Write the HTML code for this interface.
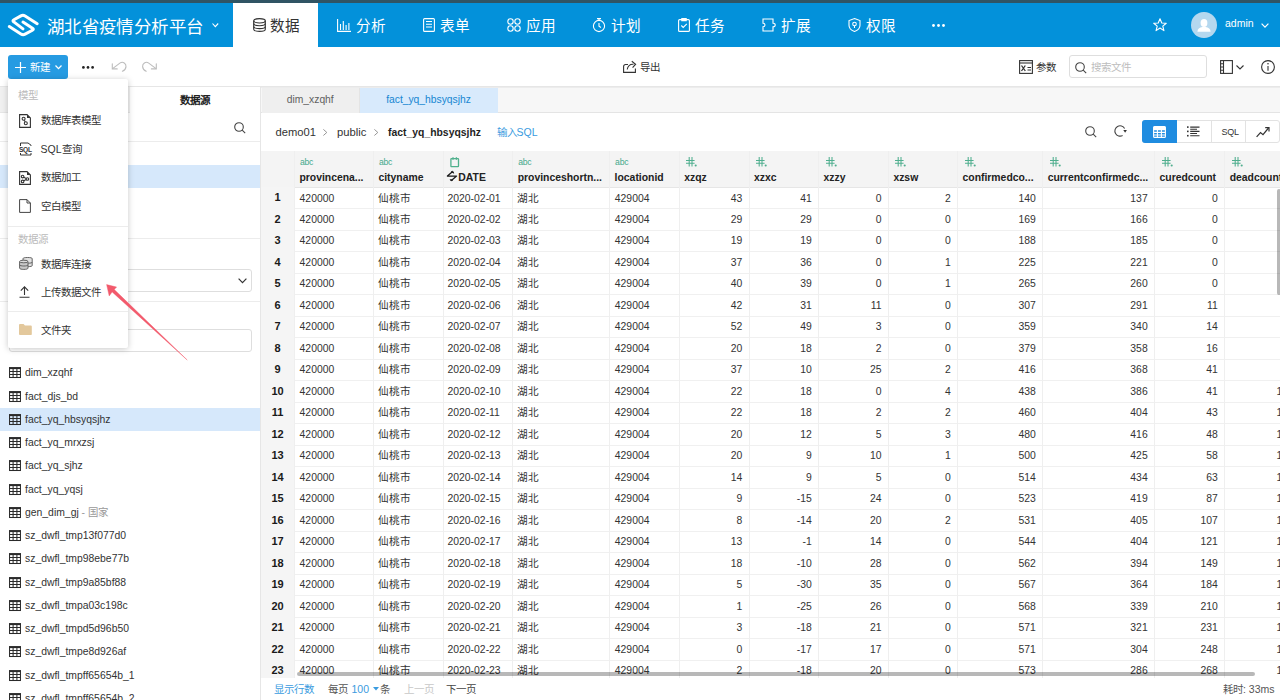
<!DOCTYPE html>
<html lang="zh-CN">
<head>
<meta charset="utf-8">
<style>
*{box-sizing:border-box;margin:0;padding:0}
html,body{width:1280px;height:700px;overflow:hidden;background:#fff;font-family:"Liberation Sans",sans-serif;color:#333;font-size:10.4px}
.abs{position:absolute}
#topstrip{position:absolute;left:0;top:0;width:1280px;height:3px;background:#305464}
#header{position:absolute;left:0;top:3px;width:1280px;height:44px;background:#0391da}
.title{position:absolute;left:47px;top:10.6px;font-size:17.45px;letter-spacing:0.36px;color:#fff;line-height:26px;white-space:nowrap}
.nav{position:absolute;top:0;height:44px;width:85px;color:#fff;font-size:14.6px;line-height:46px;white-space:nowrap}
.nav.active{background:#fff;color:#333}
.nav svg{position:absolute}
.nav span{position:absolute}
svg{overflow:visible}
.hl{position:absolute;left:294.4px;width:986px;height:1px;background:#f0f0f0}
.vl{position:absolute;width:1px;background:#efefef}
.tabc{position:absolute;font-size:8.6px;line-height:10px;color:#45a98c;letter-spacing:-0.2px}
.hname{position:absolute;font-weight:bold;font-size:10.4px;line-height:14px;color:#222;white-space:nowrap}
.rn{position:absolute;left:261px;width:33px;text-align:center;font-weight:bold;line-height:21px;font-size:11px;color:#1a1a1a}
.cl{position:absolute;line-height:21px;white-space:nowrap;color:#333}
.cr{position:absolute;line-height:21px;white-space:nowrap;text-align:right;color:#333}

</style>
</head>
<body>
<div id="topstrip"></div>
<div id="header">
  <svg class="abs" style="left:0;top:-3px" width="45" height="45" viewBox="0 0 45 45">
    <g fill="none" stroke="#fff" stroke-width="3" stroke-linecap="round" stroke-linejoin="round">
      <path d="M37.2,23.7L25.1,16Q23,14.7 20.9,15.9L13.9,19.7Q12.1,20.7 13.8,21.9L23,28.9"/>
      <path d="M9.3,26.5L20.9,34Q23,35.3 25.1,34.2L32.4,30.3Q34.2,29.3 32.5,28.2L23,22"/>
    </g>
  </svg>
  <div class="title">湖北省疫情分析平台</div>
  <svg class="abs" style="left:212px;top:20px" width="7" height="5" viewBox="0 0 7 5"><polyline points="0.5,0.5 3.3,3.6 6.2,0.5" fill="none" stroke="#fff" stroke-width="1.1"/></svg>

  <div class="nav active" style="left:233px">
    <svg style="left:20px;top:15px" width="13" height="14" viewBox="0 0 13 14"><g fill="none" stroke="#333" stroke-width="1.1"><ellipse cx="6.5" cy="2.8" rx="5.8" ry="2.2"/><path d="M0.7,2.8V11.2c0,1.2 2.6,2.2 5.8,2.2s5.8,-1 5.8,-2.2V2.8"/><path d="M0.7,5.6c0,1.2 2.6,2.2 5.8,2.2s5.8,-1 5.8,-2.2"/><path d="M0.7,8.4c0,1.2 2.6,2.2 5.8,2.2s5.8,-1 5.8,-2.2"/></g></svg>
    <span style="left:37.3px">数据</span>
  </div>
  <div class="nav" style="left:318px">
    <svg style="left:19px;top:16px" width="14" height="13" viewBox="0 0 14 13"><g fill="none" stroke="#fff" stroke-width="1.1"><path d="M0.6,0V12.4H14"/><path d="M3.5,5V11M6.3,2V11M9.1,6V11M11.9,4V11"/></g></svg>
    <span style="left:38.3px">分析</span>
  </div>
  <div class="nav" style="left:403px">
    <svg style="left:20px;top:15px" width="12" height="14" viewBox="0 0 12 14"><g fill="none" stroke="#fff" stroke-width="1.1"><rect x="0.6" y="0.6" width="10.8" height="12.8" rx="1"/><path d="M3,3.5H9M3,6.2H9M3,9H9"/></g></svg>
    <span style="left:37.3px">表单</span>
  </div>
  <div class="nav" style="left:488px">
    <svg style="left:19px;top:15px" width="14" height="14" viewBox="0 0 14 14"><g fill="none" stroke="#fff" stroke-width="1.1"><circle cx="3.5" cy="3.5" r="2.7"/><circle cx="10.5" cy="3.5" r="2.7"/><circle cx="3.5" cy="10.5" r="2.7"/><circle cx="10.5" cy="10.5" r="2.7"/></g></svg>
    <span style="left:38.3px">应用</span>
  </div>
  <div class="nav" style="left:573px">
    <svg style="left:19px;top:15px" width="14" height="14" viewBox="0 0 14 14"><g fill="none" stroke="#fff" stroke-width="1.1"><circle cx="7" cy="8" r="5.6"/><path d="M7,5V8.3L9,9.5M5,0.6H9M7,0.6V2.4"/></g></svg>
    <span style="left:38.3px">计划</span>
  </div>
  <div class="nav" style="left:658px">
    <svg style="left:20px;top:15px" width="12" height="14" viewBox="0 0 12 14"><g fill="none" stroke="#fff" stroke-width="1.1"><rect x="0.6" y="1.6" width="10.8" height="11.8" rx="1"/><path d="M3.8,0.6H8.2V2.6H3.8Z"/><path d="M3.3,7.5L5.2,9.4L8.8,5.8"/></g></svg>
    <span style="left:37.3px">任务</span>
  </div>
  <div class="nav" style="left:743px">
    <svg style="left:19px;top:15px" width="14" height="14" viewBox="0 0 14 14"><g fill="none" stroke="#fff" stroke-width="1.1"><path d="M1,1H11V5.2C12.5,5.2 13.2,6 13.2,7S12.5,8.8 11,8.8V13H1V8.8C2.5,8.8 3,8 3,7S2.5,5.2 1,5.2Z"/></g></svg>
    <span style="left:38.3px">扩展</span>
  </div>
  <div class="nav" style="left:828px">
    <svg style="left:20px;top:15px" width="13" height="14" viewBox="0 0 13 14"><g fill="none" stroke="#fff" stroke-width="1.1"><path d="M6.5,0.6L12,2.6V7.2C12,10.2 9.6,12.4 6.5,13.4C3.4,12.4 1,10.2 1,7.2V2.6Z"/><circle cx="6.5" cy="6" r="1.8"/><path d="M6.5,7.8V10"/></g></svg>
    <span style="left:38.3px">权限</span>
  </div>
  <div class="nav" style="left:913px;width:50px">
    <svg style="left:19px;top:21px" width="13" height="3" viewBox="0 0 13 3"><g fill="#fff"><circle cx="1.5" cy="1.5" r="1.4"/><circle cx="6.5" cy="1.5" r="1.4"/><circle cx="11.5" cy="1.5" r="1.4"/></g></svg>
  </div>

  <svg class="abs" style="left:1153px;top:15.2px" width="14" height="14" viewBox="0 0 15 15"><path d="M7.5,0.8L9.4,5.3L14.2,5.6L10.5,8.7L11.7,13.5L7.5,10.8L3.3,13.5L4.5,8.7L0.8,5.6L5.6,5.3Z" fill="none" stroke="#fff" stroke-width="1.2" stroke-linejoin="round"/></svg>
  <div class="abs" style="left:1190.7px;top:8.6px;width:26px;height:26.5px;border-radius:50%;background:#b5d8ef;overflow:hidden">
    <svg width="26" height="26" viewBox="0 0 26 26"><g fill="#fff"><ellipse cx="13" cy="11" rx="3.4" ry="3.9"/><path d="M6.4,19.8C6.4,16.8 8.6,15.4 11.4,15H14.6C17.4,15.4 19.6,16.8 19.6,19.8Z"/></g></svg>
  </div>
  <div class="abs" style="left:1225px;top:6.8px;color:#fff;font-size:10.5px;line-height:26px">admin</div>
  <svg class="abs" style="left:1261px;top:19.5px" width="9" height="6" viewBox="0 0 9 6"><polyline points="0.6,0.6 4,4.2 7.4,0.6" fill="none" stroke="#fff" stroke-width="1.2"/></svg>
</div>


<!-- toolbar -->
<div id="toolbar" class="abs" style="left:0;top:47px;width:1280px;height:40px;border-bottom:1px solid #e6e6e6">
  <div class="abs" style="left:8px;top:8.2px;width:60px;height:23.6px;background:#269be2;border-radius:3px"></div>
  <svg class="abs" style="left:14.5px;top:14.5px" width="11" height="11" viewBox="0 0 11 11"><path d="M5.5,0V11M0,5.5H11" stroke="#fff" stroke-width="1.2"/></svg>
  <div class="abs" style="left:30px;top:13px;color:#fff;font-size:10.5px;line-height:14px">新建</div>
  <svg class="abs" style="left:55px;top:18px" width="7" height="5" viewBox="0 0 7 5"><polyline points="0.5,0.5 3.5,3.6 6.5,0.5" fill="none" stroke="#fff" stroke-width="1.3"/></svg>
  <svg class="abs" style="left:82px;top:18.6px" width="12" height="3" viewBox="0 0 12 3"><g fill="#222"><circle cx="1.4" cy="1.4" r="1.35"/><circle cx="6" cy="1.4" r="1.35"/><circle cx="10.6" cy="1.4" r="1.35"/></g></svg>
  <svg class="abs" style="left:105px;top:8px" width="60" height="25" viewBox="105 55 60 25"><g fill="none" stroke="#bdbdbd" stroke-width="1.1" stroke-linecap="round"><path d="M112.9,68.4L120.2,62.9C123,61.2 126.2,63.5 126,66.6C125.9,68.6 124.5,70.3 122.4,71.3"/><path d="M112.3,63.8V68.9H117.2"/><path d="M155.7,68.4L148.4,62.9C145.6,61.2 142.4,63.5 142.6,66.6C142.7,68.6 144.1,70.3 146.2,71.3"/><path d="M156.3,63.8V68.9H151.4"/></g></svg>

  <svg class="abs" style="left:623px;top:13px" width="14" height="13" viewBox="0 0 14 13"><g fill="none" stroke="#333" stroke-width="1.1"><path d="M5,4.5H2.5C1.4,4.5 0.6,5.3 0.6,6.4V12.4H12.4V8.5"/><path d="M4.2,9.5C4.8,6 7.5,4 10.5,4.2"/><path d="M8.8,1.2L12.6,4.2L9.6,7.6"/></g></svg>
  <div class="abs" style="left:640px;top:12.5px;font-size:10.5px;line-height:14px;color:#333">导出</div>

  <svg class="abs" style="left:1019px;top:13px" width="14" height="14" viewBox="0 0 14 14"><g fill="none" stroke="#333" stroke-width="1.1"><rect x="0.6" y="0.6" width="12.8" height="12.8"/><path d="M0.6,3H13.4"/></g><path d="M2.5,5.5L6.3,11M6.3,5.5L2.5,11" stroke="#333" stroke-width="1.3"/><path d="M8.5,7.5H12M8.5,10H12" stroke="#333" stroke-width="1"/></svg>
  <div class="abs" style="left:1036px;top:13px;font-size:10.5px;line-height:14px;color:#333">参数</div>
  <div class="abs" style="left:1069px;top:7.9px;width:137.5px;height:23px;border:1px solid #dedede;border-radius:3px"></div>
  <svg class="abs" style="left:1074.5px;top:14.5px" width="12" height="12" viewBox="0 0 12 12"><g fill="none" stroke="#444" stroke-width="1.1"><circle cx="5" cy="5" r="4.3"/><path d="M8.2,8.2L11.2,11.2"/></g></svg>
  <div class="abs" style="left:1090.5px;top:12.5px;font-size:10.5px;line-height:14px;color:#bdbdbd">搜索文件</div>
  <svg class="abs" style="left:1220px;top:13px" width="13" height="14" viewBox="0 0 13 14"><g fill="none" stroke="#333" stroke-width="1.1"><rect x="0.6" y="0.6" width="11.8" height="12.8"/><path d="M3.5,0.6V13.4"/><path d="M0.6,3.8H3.5M0.6,7H3.5M0.6,10.2H3.5"/></g></svg>
  <svg class="abs" style="left:1236px;top:18px" width="8" height="5" viewBox="0 0 8 5"><polyline points="0.5,0.5 4,4 7.5,0.5" fill="none" stroke="#333" stroke-width="1.1"/></svg>
  <svg class="abs" style="left:1261px;top:13px" width="14" height="14" viewBox="0 0 14 14"><g fill="none" stroke="#333" stroke-width="1.1"><circle cx="7" cy="7" r="6.4"/><path d="M7,6V10.8"/></g><circle cx="7" cy="3.8" r="0.8" fill="#333"/></svg>
</div>

<!-- left panel -->
<div id="left" class="abs" style="left:0;top:87px;width:261px;height:613px;border-right:1px solid #e6e6e6;overflow:hidden">
  <div class="abs" style="left:0;top:0;width:130px;height:26px;background:#f0f0f0;border-bottom:1px solid #e6e6e6"></div>
  <div class="abs" style="left:130px;top:0;width:130px;height:26px;font-weight:bold;text-align:center;line-height:26px;font-size:10.5px;color:#222">数据源</div>
  <svg class="abs" style="left:234px;top:35px" width="12" height="12" viewBox="0 0 12 12"><g fill="none" stroke="#444" stroke-width="1.1"><circle cx="5" cy="5" r="4.3"/><path d="M8.2,8.2L11.2,11.2"/></g></svg>
  <div class="abs" style="left:0;top:54px;width:260px;height:1px;background:#ececec"></div>
  <div class="abs" style="left:0;top:78px;width:260px;height:23px;background:#d6e8fb"></div>
  <div class="abs" style="left:0;top:151px;width:260px;height:1px;background:#ececec"></div>
  <div class="abs" style="left:9px;top:181.5px;width:242.5px;height:23px;border:1px solid #dedede;border-radius:3px"></div>
  <svg class="abs" style="left:238px;top:190.5px" width="9" height="6" viewBox="0 0 9 6"><polyline points="0.6,0.6 4.5,4.6 8.4,0.6" fill="none" stroke="#333" stroke-width="1.2"/></svg>
  <div class="abs" style="left:0;top:213.5px;width:260px;height:1px;background:#ececec"></div>
  <div class="abs" style="left:9px;top:242px;width:242.5px;height:23px;border:1px solid #dedede;border-radius:3px"></div>
  <div class="abs" style="left:0;top:320.5px;width:260px;height:23.25px;background:#d6e8fb"></div>
  <svg class="abs" style="left:9px;top:280.30px" width="12" height="11" viewBox="0 0 12 11"><g fill="none" stroke="#2a2a2a" stroke-width="1.05"><rect x="0.55" y="0.8" width="10.9" height="9.7"/><path d="M0.5,4.4H11.5M0.5,7.4H11.5M4.1,2V10.5M7.9,2V10.5"/></g><rect x="0" y="0.2" width="12" height="1.9" fill="#2a2a2a"/></svg>
<div class="abs" style="left:25px;top:279.40px;line-height:14px;font-size:10.4px;color:#333;white-space:nowrap">dim_xzqhf</div>
<svg class="abs" style="left:9px;top:303.55px" width="12" height="11" viewBox="0 0 12 11"><g fill="none" stroke="#2a2a2a" stroke-width="1.05"><rect x="0.55" y="0.8" width="10.9" height="9.7"/><path d="M0.5,4.4H11.5M0.5,7.4H11.5M4.1,2V10.5M7.9,2V10.5"/></g><rect x="0" y="0.2" width="12" height="1.9" fill="#2a2a2a"/></svg>
<div class="abs" style="left:25px;top:302.65px;line-height:14px;font-size:10.4px;color:#333;white-space:nowrap">fact_djs_bd</div>
<svg class="abs" style="left:9px;top:326.80px" width="12" height="11" viewBox="0 0 12 11"><g fill="none" stroke="#2a2a2a" stroke-width="1.05"><rect x="0.55" y="0.8" width="10.9" height="9.7"/><path d="M0.5,4.4H11.5M0.5,7.4H11.5M4.1,2V10.5M7.9,2V10.5"/></g><rect x="0" y="0.2" width="12" height="1.9" fill="#2a2a2a"/></svg>
<div class="abs" style="left:25px;top:325.90px;line-height:14px;font-size:10.4px;color:#333;white-space:nowrap">fact_yq_hbsyqsjhz</div>
<svg class="abs" style="left:9px;top:350.05px" width="12" height="11" viewBox="0 0 12 11"><g fill="none" stroke="#2a2a2a" stroke-width="1.05"><rect x="0.55" y="0.8" width="10.9" height="9.7"/><path d="M0.5,4.4H11.5M0.5,7.4H11.5M4.1,2V10.5M7.9,2V10.5"/></g><rect x="0" y="0.2" width="12" height="1.9" fill="#2a2a2a"/></svg>
<div class="abs" style="left:25px;top:349.15px;line-height:14px;font-size:10.4px;color:#333;white-space:nowrap">fact_yq_mrxzsj</div>
<svg class="abs" style="left:9px;top:373.30px" width="12" height="11" viewBox="0 0 12 11"><g fill="none" stroke="#2a2a2a" stroke-width="1.05"><rect x="0.55" y="0.8" width="10.9" height="9.7"/><path d="M0.5,4.4H11.5M0.5,7.4H11.5M4.1,2V10.5M7.9,2V10.5"/></g><rect x="0" y="0.2" width="12" height="1.9" fill="#2a2a2a"/></svg>
<div class="abs" style="left:25px;top:372.40px;line-height:14px;font-size:10.4px;color:#333;white-space:nowrap">fact_yq_sjhz</div>
<svg class="abs" style="left:9px;top:396.55px" width="12" height="11" viewBox="0 0 12 11"><g fill="none" stroke="#2a2a2a" stroke-width="1.05"><rect x="0.55" y="0.8" width="10.9" height="9.7"/><path d="M0.5,4.4H11.5M0.5,7.4H11.5M4.1,2V10.5M7.9,2V10.5"/></g><rect x="0" y="0.2" width="12" height="1.9" fill="#2a2a2a"/></svg>
<div class="abs" style="left:25px;top:395.65px;line-height:14px;font-size:10.4px;color:#333;white-space:nowrap">fact_yq_yqsj</div>
<svg class="abs" style="left:9px;top:419.80px" width="12" height="11" viewBox="0 0 12 11"><g fill="none" stroke="#2a2a2a" stroke-width="1.05"><rect x="0.55" y="0.8" width="10.9" height="9.7"/><path d="M0.5,4.4H11.5M0.5,7.4H11.5M4.1,2V10.5M7.9,2V10.5"/></g><rect x="0" y="0.2" width="12" height="1.9" fill="#2a2a2a"/></svg>
<div class="abs" style="left:25px;top:418.90px;line-height:14px;font-size:10.4px;color:#333;white-space:nowrap">gen_dim_gj<span style="color:#999"> - 国家</span></div>
<svg class="abs" style="left:9px;top:443.05px" width="12" height="11" viewBox="0 0 12 11"><g fill="none" stroke="#2a2a2a" stroke-width="1.05"><rect x="0.55" y="0.8" width="10.9" height="9.7"/><path d="M0.5,4.4H11.5M0.5,7.4H11.5M4.1,2V10.5M7.9,2V10.5"/></g><rect x="0" y="0.2" width="12" height="1.9" fill="#2a2a2a"/></svg>
<div class="abs" style="left:25px;top:442.15px;line-height:14px;font-size:10.4px;color:#333;white-space:nowrap">sz_dwfl_tmp13f077d0</div>
<svg class="abs" style="left:9px;top:466.30px" width="12" height="11" viewBox="0 0 12 11"><g fill="none" stroke="#2a2a2a" stroke-width="1.05"><rect x="0.55" y="0.8" width="10.9" height="9.7"/><path d="M0.5,4.4H11.5M0.5,7.4H11.5M4.1,2V10.5M7.9,2V10.5"/></g><rect x="0" y="0.2" width="12" height="1.9" fill="#2a2a2a"/></svg>
<div class="abs" style="left:25px;top:465.40px;line-height:14px;font-size:10.4px;color:#333;white-space:nowrap">sz_dwfl_tmp98ebe77b</div>
<svg class="abs" style="left:9px;top:489.55px" width="12" height="11" viewBox="0 0 12 11"><g fill="none" stroke="#2a2a2a" stroke-width="1.05"><rect x="0.55" y="0.8" width="10.9" height="9.7"/><path d="M0.5,4.4H11.5M0.5,7.4H11.5M4.1,2V10.5M7.9,2V10.5"/></g><rect x="0" y="0.2" width="12" height="1.9" fill="#2a2a2a"/></svg>
<div class="abs" style="left:25px;top:488.65px;line-height:14px;font-size:10.4px;color:#333;white-space:nowrap">sz_dwfl_tmp9a85bf88</div>
<svg class="abs" style="left:9px;top:512.80px" width="12" height="11" viewBox="0 0 12 11"><g fill="none" stroke="#2a2a2a" stroke-width="1.05"><rect x="0.55" y="0.8" width="10.9" height="9.7"/><path d="M0.5,4.4H11.5M0.5,7.4H11.5M4.1,2V10.5M7.9,2V10.5"/></g><rect x="0" y="0.2" width="12" height="1.9" fill="#2a2a2a"/></svg>
<div class="abs" style="left:25px;top:511.90px;line-height:14px;font-size:10.4px;color:#333;white-space:nowrap">sz_dwfl_tmpa03c198c</div>
<svg class="abs" style="left:9px;top:536.05px" width="12" height="11" viewBox="0 0 12 11"><g fill="none" stroke="#2a2a2a" stroke-width="1.05"><rect x="0.55" y="0.8" width="10.9" height="9.7"/><path d="M0.5,4.4H11.5M0.5,7.4H11.5M4.1,2V10.5M7.9,2V10.5"/></g><rect x="0" y="0.2" width="12" height="1.9" fill="#2a2a2a"/></svg>
<div class="abs" style="left:25px;top:535.15px;line-height:14px;font-size:10.4px;color:#333;white-space:nowrap">sz_dwfl_tmpd5d96b50</div>
<svg class="abs" style="left:9px;top:559.30px" width="12" height="11" viewBox="0 0 12 11"><g fill="none" stroke="#2a2a2a" stroke-width="1.05"><rect x="0.55" y="0.8" width="10.9" height="9.7"/><path d="M0.5,4.4H11.5M0.5,7.4H11.5M4.1,2V10.5M7.9,2V10.5"/></g><rect x="0" y="0.2" width="12" height="1.9" fill="#2a2a2a"/></svg>
<div class="abs" style="left:25px;top:558.40px;line-height:14px;font-size:10.4px;color:#333;white-space:nowrap">sz_dwfl_tmpe8d926af</div>
<svg class="abs" style="left:9px;top:582.55px" width="12" height="11" viewBox="0 0 12 11"><g fill="none" stroke="#2a2a2a" stroke-width="1.05"><rect x="0.55" y="0.8" width="10.9" height="9.7"/><path d="M0.5,4.4H11.5M0.5,7.4H11.5M4.1,2V10.5M7.9,2V10.5"/></g><rect x="0" y="0.2" width="12" height="1.9" fill="#2a2a2a"/></svg>
<div class="abs" style="left:25px;top:581.65px;line-height:14px;font-size:10.4px;color:#333;white-space:nowrap">sz_dwfl_tmpff65654b_1</div>
<svg class="abs" style="left:9px;top:605.80px" width="12" height="11" viewBox="0 0 12 11"><g fill="none" stroke="#2a2a2a" stroke-width="1.05"><rect x="0.55" y="0.8" width="10.9" height="9.7"/><path d="M0.5,4.4H11.5M0.5,7.4H11.5M4.1,2V10.5M7.9,2V10.5"/></g><rect x="0" y="0.2" width="12" height="1.9" fill="#2a2a2a"/></svg>
<div class="abs" style="left:25px;top:604.90px;line-height:14px;font-size:10.4px;color:#333;white-space:nowrap">sz_dwfl_tmpff65654b_2</div>
</div>

<!-- right panel top -->
<div id="right" class="abs" style="left:261px;top:87px;width:1019px;height:64px;overflow:hidden">
  <div class="abs" style="left:0;top:0;width:1019px;height:25.5px;background:#f7f7f7;border-bottom:1px solid #e4e4e4;border-top:1px solid #ececec"></div>
  <div class="abs" style="left:1px;top:1px;width:97.5px;height:24.5px;background:#efefef;border-right:1px solid #e4e4e4;text-align:center;line-height:24px;color:#5f5f5f;font-size:10.3px">dim_xzqhf</div>
  <div class="abs" style="left:98.5px;top:1px;width:138px;height:24.5px;background:#d8eafc;text-align:center;line-height:24px;color:#1686d2;font-size:10.3px">fact_yq_hbsyqsjhz</div>
  <div class="abs" style="left:14.5px;top:38px;line-height:14px;font-size:11.2px;color:#333;white-space:nowrap">demo01</div>
  <svg class="abs" style="left:62.4px;top:41.9px" width="5" height="8" viewBox="0 0 5 8"><polyline points="0.4,0.4 3.8,3.45 0.4,6.5" fill="none" stroke="#8a8a8a" stroke-width="0.9"/></svg>
  <div class="abs" style="left:76px;top:38.3px;line-height:14px;font-size:11.25px;color:#333;white-space:nowrap">public</div>
  <svg class="abs" style="left:112.6px;top:41.9px" width="5" height="8" viewBox="0 0 5 8"><polyline points="0.4,0.4 3.8,3.45 0.4,6.5" fill="none" stroke="#8a8a8a" stroke-width="0.9"/></svg>
  <div class="abs" style="left:127px;top:39px;line-height:14px;font-size:10.4px;font-weight:bold;color:#1f1f1f;white-space:nowrap">fact_yq_hbsyqsjhz</div>
  <div class="abs" style="left:235.5px;top:37.5px;line-height:14px;font-size:10.5px;color:#3a9be0;white-space:nowrap">输入SQL</div>

  <svg class="abs" style="left:824px;top:38.5px" width="12" height="12" viewBox="0 0 12 12"><g fill="none" stroke="#444" stroke-width="1.1"><circle cx="5" cy="5" r="4.3"/><path d="M8.2,8.2L11.2,11.2"/></g></svg>
  <svg class="abs" style="left:852.8px;top:38.3px" width="13" height="12" viewBox="0 0 13 12"><path d="M8.6,10.5A5.2,5.2 0 1 1 10.6,3.4" fill="none" stroke="#444" stroke-width="1.1"/><path d="M9.3,4.9L12.9,4.9L11.1,7.8Z" fill="#333"/></svg>
  <div class="abs" style="left:881px;top:33px;width:137.5px;height:23px;border:1px solid #e2e2e2;border-radius:3px"></div>
  <div class="abs" style="left:881px;top:33px;width:34.5px;height:23px;background:#1f8ce0;border-radius:3px 0 0 3px"></div>
  <div class="abs" style="left:949.5px;top:33.5px;width:1px;height:22px;background:#e2e2e2"></div>
  <div class="abs" style="left:984px;top:33.5px;width:1px;height:22px;background:#e2e2e2"></div>
  <svg class="abs" style="left:892px;top:38.5px" width="13" height="12" viewBox="0 0 13 12"><g fill="none" stroke="#fff" stroke-width="1.1"><rect x="0.6" y="0.6" width="11.8" height="10.8" rx="1"/><path d="M0.6,3.6H12.4M0.6,6.4H12.4M0.6,9H12.4M4.4,3.6V11.4M8.4,3.6V11.4"/></g><rect x="0.6" y="0.6" width="11.8" height="3" fill="#fff"/></svg>
  <svg class="abs" style="left:926px;top:39px" width="13" height="11" viewBox="0 0 13 11"><g fill="#333"><rect x="0" y="0.3" width="1.6" height="1.6"/><rect x="0" y="4.6" width="1.6" height="1.6"/><rect x="0" y="8.9" width="1.6" height="1.6"/></g><g stroke="#333" stroke-width="1.1"><path d="M3.2,1.1H12.5M3.2,5.4H12.5M3.2,9.7H12.5M3.2,3.25H10M3.2,7.55H10"/></g></svg>
  <div class="abs" style="left:960.5px;top:38.5px;font-size:9px;line-height:12px;color:#333;letter-spacing:-0.3px">SQL</div>
  <svg class="abs" style="left:995px;top:38.5px" width="14" height="12" viewBox="0 0 14 12"><g fill="none" stroke="#333" stroke-width="1.2"><path d="M0.6,10.8L4.5,6.5L7,8.6L12.5,2"/><path d="M9.2,1.6H13V5.4"/></g></svg>
</div>

<!-- vertical scrollbar -->

<div id="table">
<div class="abs" style="left:261px;top:151px;width:1019px;height:36.5px;background:#f4f4f4"></div>
<div class="abs" style="left:261px;top:187.2px;width:33.39999999999998px;height:490.8px;background:#f5f5f5"></div>
<div class="hl" style="top:208.19px"></div>
<div class="hl" style="top:229.69px"></div>
<div class="hl" style="top:251.19px"></div>
<div class="hl" style="top:272.68px"></div>
<div class="hl" style="top:294.18px"></div>
<div class="hl" style="top:315.67px"></div>
<div class="hl" style="top:337.16px"></div>
<div class="hl" style="top:358.66px"></div>
<div class="hl" style="top:380.15px"></div>
<div class="hl" style="top:401.65px"></div>
<div class="hl" style="top:423.14px"></div>
<div class="hl" style="top:444.64px"></div>
<div class="hl" style="top:466.13px"></div>
<div class="hl" style="top:487.63px"></div>
<div class="hl" style="top:509.12px"></div>
<div class="hl" style="top:530.62px"></div>
<div class="hl" style="top:552.12px"></div>
<div class="hl" style="top:573.61px"></div>
<div class="hl" style="top:595.11px"></div>
<div class="hl" style="top:616.60px"></div>
<div class="hl" style="top:638.10px"></div>
<div class="hl" style="top:659.59px"></div>
<div class="hl" style="top:681.09px"></div>
<div class="hl" style="top:186.70px;background:#e6e6e6"></div>
<div class="vl" style="left:293.90px;top:151px;height:527px"></div>
<div class="vl" style="left:372.90px;top:151px;height:527px"></div>
<div class="vl" style="left:442.50px;top:151px;height:527px"></div>
<div class="vl" style="left:512.20px;top:151px;height:527px"></div>
<div class="vl" style="left:609.10px;top:151px;height:527px"></div>
<div class="vl" style="left:678.80px;top:151px;height:527px"></div>
<div class="vl" style="left:748.50px;top:151px;height:527px"></div>
<div class="vl" style="left:818.10px;top:151px;height:527px"></div>
<div class="vl" style="left:887.90px;top:151px;height:527px"></div>
<div class="vl" style="left:957.00px;top:151px;height:527px"></div>
<div class="vl" style="left:1042.20px;top:151px;height:527px"></div>
<div class="vl" style="left:1154.00px;top:151px;height:527px"></div>
<div class="vl" style="left:1224.20px;top:151px;height:527px"></div>
<div class="tabc" style="left:299.9px;top:157.2px">abc</div>
<div class="hname" style="left:299.4px;top:170.5px">provincena...</div>
<div class="tabc" style="left:378.9px;top:157.2px">abc</div>
<div class="hname" style="left:378.4px;top:170.5px">cityname</div>
<svg class="abs" style="left:449.5px;top:156.8px" width="10" height="10" viewBox="0 0 10 10"><g stroke="#4fb08c" stroke-width="1.3" fill="none"><rect x="0.9" y="1.6" width="7.6" height="8" rx="0.6"/><path d="M3,0.2V2.8M6.4,0.2V2.8"/></g></svg>
<svg class="abs" style="left:446.8px;top:171.3px" width="10" height="10" viewBox="0 0 10 10"><g fill="none" stroke="#1a1a1a" stroke-width="1.25" stroke-linejoin="round"><path d="M5.4,0.8L0.4,5H9.6L4.4,9.4"/></g><path d="M4.2,0.9L5.8,0.2L6.8,2.2Z M3.2,8.6L4.0,9.9L5.8,9.0Z" fill="#1a1a1a" stroke="#1a1a1a" stroke-width="0.8"/></svg>
<div class="hname" style="left:458.3px;top:170.5px">DATE</div>
<div class="tabc" style="left:518.2px;top:157.2px">abc</div>
<div class="hname" style="left:517.7px;top:170.5px">provinceshortn...</div>
<div class="tabc" style="left:615.1px;top:157.2px">abc</div>
<div class="hname" style="left:614.6px;top:170.5px">locationid</div>
<svg class="abs" style="left:686.3px;top:157px" width="12" height="10" viewBox="0 0 12 10"><g stroke="#4fae8e" stroke-width="1.05" fill="none"><path d="M3.2,0.1V9.4M6.0,0.1V9.4M0,3.4H8.6M0,6.3H8.6"/></g><circle cx="9.7" cy="8.5" r="1.05" fill="#4fae8e"/></svg>
<div class="hname" style="left:684.3px;top:170.5px">xzqz</div>
<svg class="abs" style="left:756.0px;top:157px" width="12" height="10" viewBox="0 0 12 10"><g stroke="#4fae8e" stroke-width="1.05" fill="none"><path d="M3.2,0.1V9.4M6.0,0.1V9.4M0,3.4H8.6M0,6.3H8.6"/></g><circle cx="9.7" cy="8.5" r="1.05" fill="#4fae8e"/></svg>
<div class="hname" style="left:754.0px;top:170.5px">xzxc</div>
<svg class="abs" style="left:825.6px;top:157px" width="12" height="10" viewBox="0 0 12 10"><g stroke="#4fae8e" stroke-width="1.05" fill="none"><path d="M3.2,0.1V9.4M6.0,0.1V9.4M0,3.4H8.6M0,6.3H8.6"/></g><circle cx="9.7" cy="8.5" r="1.05" fill="#4fae8e"/></svg>
<div class="hname" style="left:823.6px;top:170.5px">xzzy</div>
<svg class="abs" style="left:895.4px;top:157px" width="12" height="10" viewBox="0 0 12 10"><g stroke="#4fae8e" stroke-width="1.05" fill="none"><path d="M3.2,0.1V9.4M6.0,0.1V9.4M0,3.4H8.6M0,6.3H8.6"/></g><circle cx="9.7" cy="8.5" r="1.05" fill="#4fae8e"/></svg>
<div class="hname" style="left:893.4px;top:170.5px">xzsw</div>
<svg class="abs" style="left:964.5px;top:157px" width="12" height="10" viewBox="0 0 12 10"><g stroke="#4fae8e" stroke-width="1.05" fill="none"><path d="M3.2,0.1V9.4M6.0,0.1V9.4M0,3.4H8.6M0,6.3H8.6"/></g><circle cx="9.7" cy="8.5" r="1.05" fill="#4fae8e"/></svg>
<div class="hname" style="left:962.5px;top:170.5px">confirmedco...</div>
<svg class="abs" style="left:1049.7px;top:157px" width="12" height="10" viewBox="0 0 12 10"><g stroke="#4fae8e" stroke-width="1.05" fill="none"><path d="M3.2,0.1V9.4M6.0,0.1V9.4M0,3.4H8.6M0,6.3H8.6"/></g><circle cx="9.7" cy="8.5" r="1.05" fill="#4fae8e"/></svg>
<div class="hname" style="left:1047.7px;top:170.5px">currentconfirmedc...</div>
<svg class="abs" style="left:1161.5px;top:157px" width="12" height="10" viewBox="0 0 12 10"><g stroke="#4fae8e" stroke-width="1.05" fill="none"><path d="M3.2,0.1V9.4M6.0,0.1V9.4M0,3.4H8.6M0,6.3H8.6"/></g><circle cx="9.7" cy="8.5" r="1.05" fill="#4fae8e"/></svg>
<div class="hname" style="left:1159.5px;top:170.5px">curedcount</div>
<svg class="abs" style="left:1231.7px;top:157px" width="12" height="10" viewBox="0 0 12 10"><g stroke="#4fae8e" stroke-width="1.05" fill="none"><path d="M3.2,0.1V9.4M6.0,0.1V9.4M0,3.4H8.6M0,6.3H8.6"/></g><circle cx="9.7" cy="8.5" r="1.05" fill="#4fae8e"/></svg>
<div class="hname" style="left:1229.7px;top:170.5px">deadcount</div>
<div class="rn" style="top:187.40px">1</div>
<div class="cl" style="left:299.6px;top:187.50px">420000</div>
<div class="cl" style="left:377.5px;top:187.50px;font-size:10.6px">仙桃市</div>
<div class="cl" style="left:447.5px;top:187.50px">2020-02-01</div>
<div class="cl" style="left:516.8px;top:187.50px;font-size:10.6px">湖北</div>
<div class="cl" style="left:614.8px;top:187.50px">429004</div>
<div class="cr" style="left:679.3px;width:62.9px;top:187.50px">43</div>
<div class="cr" style="left:749.0px;width:62.8px;top:187.50px">41</div>
<div class="cr" style="left:818.6px;width:63.0px;top:187.50px">0</div>
<div class="cr" style="left:888.4px;width:62.3px;top:187.50px">2</div>
<div class="cr" style="left:957.5px;width:78.4px;top:187.50px">140</div>
<div class="cr" style="left:1042.7px;width:105.0px;top:187.50px">137</div>
<div class="cr" style="left:1154.5px;width:63.4px;top:187.50px">0</div>
<div class="rn" style="top:208.89px">2</div>
<div class="cl" style="left:299.6px;top:209.00px">420000</div>
<div class="cl" style="left:377.5px;top:209.00px;font-size:10.6px">仙桃市</div>
<div class="cl" style="left:447.5px;top:209.00px">2020-02-02</div>
<div class="cl" style="left:516.8px;top:209.00px;font-size:10.6px">湖北</div>
<div class="cl" style="left:614.8px;top:209.00px">429004</div>
<div class="cr" style="left:679.3px;width:62.9px;top:209.00px">29</div>
<div class="cr" style="left:749.0px;width:62.8px;top:209.00px">29</div>
<div class="cr" style="left:818.6px;width:63.0px;top:209.00px">0</div>
<div class="cr" style="left:888.4px;width:62.3px;top:209.00px">0</div>
<div class="cr" style="left:957.5px;width:78.4px;top:209.00px">169</div>
<div class="cr" style="left:1042.7px;width:105.0px;top:209.00px">166</div>
<div class="cr" style="left:1154.5px;width:63.4px;top:209.00px">0</div>
<div class="rn" style="top:230.39px">3</div>
<div class="cl" style="left:299.6px;top:230.49px">420000</div>
<div class="cl" style="left:377.5px;top:230.49px;font-size:10.6px">仙桃市</div>
<div class="cl" style="left:447.5px;top:230.49px">2020-02-03</div>
<div class="cl" style="left:516.8px;top:230.49px;font-size:10.6px">湖北</div>
<div class="cl" style="left:614.8px;top:230.49px">429004</div>
<div class="cr" style="left:679.3px;width:62.9px;top:230.49px">19</div>
<div class="cr" style="left:749.0px;width:62.8px;top:230.49px">19</div>
<div class="cr" style="left:818.6px;width:63.0px;top:230.49px">0</div>
<div class="cr" style="left:888.4px;width:62.3px;top:230.49px">0</div>
<div class="cr" style="left:957.5px;width:78.4px;top:230.49px">188</div>
<div class="cr" style="left:1042.7px;width:105.0px;top:230.49px">185</div>
<div class="cr" style="left:1154.5px;width:63.4px;top:230.49px">0</div>
<div class="rn" style="top:251.88px">4</div>
<div class="cl" style="left:299.6px;top:251.99px">420000</div>
<div class="cl" style="left:377.5px;top:251.99px;font-size:10.6px">仙桃市</div>
<div class="cl" style="left:447.5px;top:251.99px">2020-02-04</div>
<div class="cl" style="left:516.8px;top:251.99px;font-size:10.6px">湖北</div>
<div class="cl" style="left:614.8px;top:251.99px">429004</div>
<div class="cr" style="left:679.3px;width:62.9px;top:251.99px">37</div>
<div class="cr" style="left:749.0px;width:62.8px;top:251.99px">36</div>
<div class="cr" style="left:818.6px;width:63.0px;top:251.99px">0</div>
<div class="cr" style="left:888.4px;width:62.3px;top:251.99px">1</div>
<div class="cr" style="left:957.5px;width:78.4px;top:251.99px">225</div>
<div class="cr" style="left:1042.7px;width:105.0px;top:251.99px">221</div>
<div class="cr" style="left:1154.5px;width:63.4px;top:251.99px">0</div>
<div class="rn" style="top:273.38px">5</div>
<div class="cl" style="left:299.6px;top:273.48px">420000</div>
<div class="cl" style="left:377.5px;top:273.48px;font-size:10.6px">仙桃市</div>
<div class="cl" style="left:447.5px;top:273.48px">2020-02-05</div>
<div class="cl" style="left:516.8px;top:273.48px;font-size:10.6px">湖北</div>
<div class="cl" style="left:614.8px;top:273.48px">429004</div>
<div class="cr" style="left:679.3px;width:62.9px;top:273.48px">40</div>
<div class="cr" style="left:749.0px;width:62.8px;top:273.48px">39</div>
<div class="cr" style="left:818.6px;width:63.0px;top:273.48px">0</div>
<div class="cr" style="left:888.4px;width:62.3px;top:273.48px">1</div>
<div class="cr" style="left:957.5px;width:78.4px;top:273.48px">265</div>
<div class="cr" style="left:1042.7px;width:105.0px;top:273.48px">260</div>
<div class="cr" style="left:1154.5px;width:63.4px;top:273.48px">0</div>
<div class="rn" style="top:294.88px">6</div>
<div class="cl" style="left:299.6px;top:294.98px">420000</div>
<div class="cl" style="left:377.5px;top:294.98px;font-size:10.6px">仙桃市</div>
<div class="cl" style="left:447.5px;top:294.98px">2020-02-06</div>
<div class="cl" style="left:516.8px;top:294.98px;font-size:10.6px">湖北</div>
<div class="cl" style="left:614.8px;top:294.98px">429004</div>
<div class="cr" style="left:679.3px;width:62.9px;top:294.98px">42</div>
<div class="cr" style="left:749.0px;width:62.8px;top:294.98px">31</div>
<div class="cr" style="left:818.6px;width:63.0px;top:294.98px">11</div>
<div class="cr" style="left:888.4px;width:62.3px;top:294.98px">0</div>
<div class="cr" style="left:957.5px;width:78.4px;top:294.98px">307</div>
<div class="cr" style="left:1042.7px;width:105.0px;top:294.98px">291</div>
<div class="cr" style="left:1154.5px;width:63.4px;top:294.98px">11</div>
<div class="rn" style="top:316.37px">7</div>
<div class="cl" style="left:299.6px;top:316.47px">420000</div>
<div class="cl" style="left:377.5px;top:316.47px;font-size:10.6px">仙桃市</div>
<div class="cl" style="left:447.5px;top:316.47px">2020-02-07</div>
<div class="cl" style="left:516.8px;top:316.47px;font-size:10.6px">湖北</div>
<div class="cl" style="left:614.8px;top:316.47px">429004</div>
<div class="cr" style="left:679.3px;width:62.9px;top:316.47px">52</div>
<div class="cr" style="left:749.0px;width:62.8px;top:316.47px">49</div>
<div class="cr" style="left:818.6px;width:63.0px;top:316.47px">3</div>
<div class="cr" style="left:888.4px;width:62.3px;top:316.47px">0</div>
<div class="cr" style="left:957.5px;width:78.4px;top:316.47px">359</div>
<div class="cr" style="left:1042.7px;width:105.0px;top:316.47px">340</div>
<div class="cr" style="left:1154.5px;width:63.4px;top:316.47px">14</div>
<div class="rn" style="top:337.86px">8</div>
<div class="cl" style="left:299.6px;top:337.96px">420000</div>
<div class="cl" style="left:377.5px;top:337.96px;font-size:10.6px">仙桃市</div>
<div class="cl" style="left:447.5px;top:337.96px">2020-02-08</div>
<div class="cl" style="left:516.8px;top:337.96px;font-size:10.6px">湖北</div>
<div class="cl" style="left:614.8px;top:337.96px">429004</div>
<div class="cr" style="left:679.3px;width:62.9px;top:337.96px">20</div>
<div class="cr" style="left:749.0px;width:62.8px;top:337.96px">18</div>
<div class="cr" style="left:818.6px;width:63.0px;top:337.96px">2</div>
<div class="cr" style="left:888.4px;width:62.3px;top:337.96px">0</div>
<div class="cr" style="left:957.5px;width:78.4px;top:337.96px">379</div>
<div class="cr" style="left:1042.7px;width:105.0px;top:337.96px">358</div>
<div class="cr" style="left:1154.5px;width:63.4px;top:337.96px">16</div>
<div class="rn" style="top:359.36px">9</div>
<div class="cl" style="left:299.6px;top:359.46px">420000</div>
<div class="cl" style="left:377.5px;top:359.46px;font-size:10.6px">仙桃市</div>
<div class="cl" style="left:447.5px;top:359.46px">2020-02-09</div>
<div class="cl" style="left:516.8px;top:359.46px;font-size:10.6px">湖北</div>
<div class="cl" style="left:614.8px;top:359.46px">429004</div>
<div class="cr" style="left:679.3px;width:62.9px;top:359.46px">37</div>
<div class="cr" style="left:749.0px;width:62.8px;top:359.46px">10</div>
<div class="cr" style="left:818.6px;width:63.0px;top:359.46px">25</div>
<div class="cr" style="left:888.4px;width:62.3px;top:359.46px">2</div>
<div class="cr" style="left:957.5px;width:78.4px;top:359.46px">416</div>
<div class="cr" style="left:1042.7px;width:105.0px;top:359.46px">368</div>
<div class="cr" style="left:1154.5px;width:63.4px;top:359.46px">41</div>
<div class="rn" style="top:380.85px">10</div>
<div class="cl" style="left:299.6px;top:380.95px">420000</div>
<div class="cl" style="left:377.5px;top:380.95px;font-size:10.6px">仙桃市</div>
<div class="cl" style="left:447.5px;top:380.95px">2020-02-10</div>
<div class="cl" style="left:516.8px;top:380.95px;font-size:10.6px">湖北</div>
<div class="cl" style="left:614.8px;top:380.95px">429004</div>
<div class="cr" style="left:679.3px;width:62.9px;top:380.95px">22</div>
<div class="cr" style="left:749.0px;width:62.8px;top:380.95px">18</div>
<div class="cr" style="left:818.6px;width:63.0px;top:380.95px">0</div>
<div class="cr" style="left:888.4px;width:62.3px;top:380.95px">4</div>
<div class="cr" style="left:957.5px;width:78.4px;top:380.95px">438</div>
<div class="cr" style="left:1042.7px;width:105.0px;top:380.95px">386</div>
<div class="cr" style="left:1154.5px;width:63.4px;top:380.95px">41</div>
<div class="cl" style="left:1276.5px;top:380.95px">1</div>
<div class="rn" style="top:402.35px">11</div>
<div class="cl" style="left:299.6px;top:402.45px">420000</div>
<div class="cl" style="left:377.5px;top:402.45px;font-size:10.6px">仙桃市</div>
<div class="cl" style="left:447.5px;top:402.45px">2020-02-11</div>
<div class="cl" style="left:516.8px;top:402.45px;font-size:10.6px">湖北</div>
<div class="cl" style="left:614.8px;top:402.45px">429004</div>
<div class="cr" style="left:679.3px;width:62.9px;top:402.45px">22</div>
<div class="cr" style="left:749.0px;width:62.8px;top:402.45px">18</div>
<div class="cr" style="left:818.6px;width:63.0px;top:402.45px">2</div>
<div class="cr" style="left:888.4px;width:62.3px;top:402.45px">2</div>
<div class="cr" style="left:957.5px;width:78.4px;top:402.45px">460</div>
<div class="cr" style="left:1042.7px;width:105.0px;top:402.45px">404</div>
<div class="cr" style="left:1154.5px;width:63.4px;top:402.45px">43</div>
<div class="cl" style="left:1276.5px;top:402.45px">1</div>
<div class="rn" style="top:423.84px">12</div>
<div class="cl" style="left:299.6px;top:423.94px">420000</div>
<div class="cl" style="left:377.5px;top:423.94px;font-size:10.6px">仙桃市</div>
<div class="cl" style="left:447.5px;top:423.94px">2020-02-12</div>
<div class="cl" style="left:516.8px;top:423.94px;font-size:10.6px">湖北</div>
<div class="cl" style="left:614.8px;top:423.94px">429004</div>
<div class="cr" style="left:679.3px;width:62.9px;top:423.94px">20</div>
<div class="cr" style="left:749.0px;width:62.8px;top:423.94px">12</div>
<div class="cr" style="left:818.6px;width:63.0px;top:423.94px">5</div>
<div class="cr" style="left:888.4px;width:62.3px;top:423.94px">3</div>
<div class="cr" style="left:957.5px;width:78.4px;top:423.94px">480</div>
<div class="cr" style="left:1042.7px;width:105.0px;top:423.94px">416</div>
<div class="cr" style="left:1154.5px;width:63.4px;top:423.94px">48</div>
<div class="cl" style="left:1276.5px;top:423.94px">1</div>
<div class="rn" style="top:445.34px">13</div>
<div class="cl" style="left:299.6px;top:445.44px">420000</div>
<div class="cl" style="left:377.5px;top:445.44px;font-size:10.6px">仙桃市</div>
<div class="cl" style="left:447.5px;top:445.44px">2020-02-13</div>
<div class="cl" style="left:516.8px;top:445.44px;font-size:10.6px">湖北</div>
<div class="cl" style="left:614.8px;top:445.44px">429004</div>
<div class="cr" style="left:679.3px;width:62.9px;top:445.44px">20</div>
<div class="cr" style="left:749.0px;width:62.8px;top:445.44px">9</div>
<div class="cr" style="left:818.6px;width:63.0px;top:445.44px">10</div>
<div class="cr" style="left:888.4px;width:62.3px;top:445.44px">1</div>
<div class="cr" style="left:957.5px;width:78.4px;top:445.44px">500</div>
<div class="cr" style="left:1042.7px;width:105.0px;top:445.44px">425</div>
<div class="cr" style="left:1154.5px;width:63.4px;top:445.44px">58</div>
<div class="cl" style="left:1276.5px;top:445.44px">1</div>
<div class="rn" style="top:466.83px">14</div>
<div class="cl" style="left:299.6px;top:466.94px">420000</div>
<div class="cl" style="left:377.5px;top:466.94px;font-size:10.6px">仙桃市</div>
<div class="cl" style="left:447.5px;top:466.94px">2020-02-14</div>
<div class="cl" style="left:516.8px;top:466.94px;font-size:10.6px">湖北</div>
<div class="cl" style="left:614.8px;top:466.94px">429004</div>
<div class="cr" style="left:679.3px;width:62.9px;top:466.94px">14</div>
<div class="cr" style="left:749.0px;width:62.8px;top:466.94px">9</div>
<div class="cr" style="left:818.6px;width:63.0px;top:466.94px">5</div>
<div class="cr" style="left:888.4px;width:62.3px;top:466.94px">0</div>
<div class="cr" style="left:957.5px;width:78.4px;top:466.94px">514</div>
<div class="cr" style="left:1042.7px;width:105.0px;top:466.94px">434</div>
<div class="cr" style="left:1154.5px;width:63.4px;top:466.94px">63</div>
<div class="cl" style="left:1276.5px;top:466.94px">1</div>
<div class="rn" style="top:488.33px">15</div>
<div class="cl" style="left:299.6px;top:488.43px">420000</div>
<div class="cl" style="left:377.5px;top:488.43px;font-size:10.6px">仙桃市</div>
<div class="cl" style="left:447.5px;top:488.43px">2020-02-15</div>
<div class="cl" style="left:516.8px;top:488.43px;font-size:10.6px">湖北</div>
<div class="cl" style="left:614.8px;top:488.43px">429004</div>
<div class="cr" style="left:679.3px;width:62.9px;top:488.43px">9</div>
<div class="cr" style="left:749.0px;width:62.8px;top:488.43px">-15</div>
<div class="cr" style="left:818.6px;width:63.0px;top:488.43px">24</div>
<div class="cr" style="left:888.4px;width:62.3px;top:488.43px">0</div>
<div class="cr" style="left:957.5px;width:78.4px;top:488.43px">523</div>
<div class="cr" style="left:1042.7px;width:105.0px;top:488.43px">419</div>
<div class="cr" style="left:1154.5px;width:63.4px;top:488.43px">87</div>
<div class="cl" style="left:1276.5px;top:488.43px">1</div>
<div class="rn" style="top:509.82px">16</div>
<div class="cl" style="left:299.6px;top:509.93px">420000</div>
<div class="cl" style="left:377.5px;top:509.93px;font-size:10.6px">仙桃市</div>
<div class="cl" style="left:447.5px;top:509.93px">2020-02-16</div>
<div class="cl" style="left:516.8px;top:509.93px;font-size:10.6px">湖北</div>
<div class="cl" style="left:614.8px;top:509.93px">429004</div>
<div class="cr" style="left:679.3px;width:62.9px;top:509.93px">8</div>
<div class="cr" style="left:749.0px;width:62.8px;top:509.93px">-14</div>
<div class="cr" style="left:818.6px;width:63.0px;top:509.93px">20</div>
<div class="cr" style="left:888.4px;width:62.3px;top:509.93px">2</div>
<div class="cr" style="left:957.5px;width:78.4px;top:509.93px">531</div>
<div class="cr" style="left:1042.7px;width:105.0px;top:509.93px">405</div>
<div class="cr" style="left:1154.5px;width:63.4px;top:509.93px">107</div>
<div class="cl" style="left:1276.5px;top:509.93px">1</div>
<div class="rn" style="top:531.32px">17</div>
<div class="cl" style="left:299.6px;top:531.42px">420000</div>
<div class="cl" style="left:377.5px;top:531.42px;font-size:10.6px">仙桃市</div>
<div class="cl" style="left:447.5px;top:531.42px">2020-02-17</div>
<div class="cl" style="left:516.8px;top:531.42px;font-size:10.6px">湖北</div>
<div class="cl" style="left:614.8px;top:531.42px">429004</div>
<div class="cr" style="left:679.3px;width:62.9px;top:531.42px">13</div>
<div class="cr" style="left:749.0px;width:62.8px;top:531.42px">-1</div>
<div class="cr" style="left:818.6px;width:63.0px;top:531.42px">14</div>
<div class="cr" style="left:888.4px;width:62.3px;top:531.42px">0</div>
<div class="cr" style="left:957.5px;width:78.4px;top:531.42px">544</div>
<div class="cr" style="left:1042.7px;width:105.0px;top:531.42px">404</div>
<div class="cr" style="left:1154.5px;width:63.4px;top:531.42px">121</div>
<div class="cl" style="left:1276.5px;top:531.42px">1</div>
<div class="rn" style="top:552.82px">18</div>
<div class="cl" style="left:299.6px;top:552.91px">420000</div>
<div class="cl" style="left:377.5px;top:552.91px;font-size:10.6px">仙桃市</div>
<div class="cl" style="left:447.5px;top:552.91px">2020-02-18</div>
<div class="cl" style="left:516.8px;top:552.91px;font-size:10.6px">湖北</div>
<div class="cl" style="left:614.8px;top:552.91px">429004</div>
<div class="cr" style="left:679.3px;width:62.9px;top:552.91px">18</div>
<div class="cr" style="left:749.0px;width:62.8px;top:552.91px">-10</div>
<div class="cr" style="left:818.6px;width:63.0px;top:552.91px">28</div>
<div class="cr" style="left:888.4px;width:62.3px;top:552.91px">0</div>
<div class="cr" style="left:957.5px;width:78.4px;top:552.91px">562</div>
<div class="cr" style="left:1042.7px;width:105.0px;top:552.91px">394</div>
<div class="cr" style="left:1154.5px;width:63.4px;top:552.91px">149</div>
<div class="cl" style="left:1276.5px;top:552.91px">1</div>
<div class="rn" style="top:574.31px">19</div>
<div class="cl" style="left:299.6px;top:574.41px">420000</div>
<div class="cl" style="left:377.5px;top:574.41px;font-size:10.6px">仙桃市</div>
<div class="cl" style="left:447.5px;top:574.41px">2020-02-19</div>
<div class="cl" style="left:516.8px;top:574.41px;font-size:10.6px">湖北</div>
<div class="cl" style="left:614.8px;top:574.41px">429004</div>
<div class="cr" style="left:679.3px;width:62.9px;top:574.41px">5</div>
<div class="cr" style="left:749.0px;width:62.8px;top:574.41px">-30</div>
<div class="cr" style="left:818.6px;width:63.0px;top:574.41px">35</div>
<div class="cr" style="left:888.4px;width:62.3px;top:574.41px">0</div>
<div class="cr" style="left:957.5px;width:78.4px;top:574.41px">567</div>
<div class="cr" style="left:1042.7px;width:105.0px;top:574.41px">364</div>
<div class="cr" style="left:1154.5px;width:63.4px;top:574.41px">184</div>
<div class="cl" style="left:1276.5px;top:574.41px">1</div>
<div class="rn" style="top:595.81px">20</div>
<div class="cl" style="left:299.6px;top:595.90px">420000</div>
<div class="cl" style="left:377.5px;top:595.90px;font-size:10.6px">仙桃市</div>
<div class="cl" style="left:447.5px;top:595.90px">2020-02-20</div>
<div class="cl" style="left:516.8px;top:595.90px;font-size:10.6px">湖北</div>
<div class="cl" style="left:614.8px;top:595.90px">429004</div>
<div class="cr" style="left:679.3px;width:62.9px;top:595.90px">1</div>
<div class="cr" style="left:749.0px;width:62.8px;top:595.90px">-25</div>
<div class="cr" style="left:818.6px;width:63.0px;top:595.90px">26</div>
<div class="cr" style="left:888.4px;width:62.3px;top:595.90px">0</div>
<div class="cr" style="left:957.5px;width:78.4px;top:595.90px">568</div>
<div class="cr" style="left:1042.7px;width:105.0px;top:595.90px">339</div>
<div class="cr" style="left:1154.5px;width:63.4px;top:595.90px">210</div>
<div class="cl" style="left:1276.5px;top:595.90px">1</div>
<div class="rn" style="top:617.30px">21</div>
<div class="cl" style="left:299.6px;top:617.40px">420000</div>
<div class="cl" style="left:377.5px;top:617.40px;font-size:10.6px">仙桃市</div>
<div class="cl" style="left:447.5px;top:617.40px">2020-02-21</div>
<div class="cl" style="left:516.8px;top:617.40px;font-size:10.6px">湖北</div>
<div class="cl" style="left:614.8px;top:617.40px">429004</div>
<div class="cr" style="left:679.3px;width:62.9px;top:617.40px">3</div>
<div class="cr" style="left:749.0px;width:62.8px;top:617.40px">-18</div>
<div class="cr" style="left:818.6px;width:63.0px;top:617.40px">21</div>
<div class="cr" style="left:888.4px;width:62.3px;top:617.40px">0</div>
<div class="cr" style="left:957.5px;width:78.4px;top:617.40px">571</div>
<div class="cr" style="left:1042.7px;width:105.0px;top:617.40px">321</div>
<div class="cr" style="left:1154.5px;width:63.4px;top:617.40px">231</div>
<div class="cl" style="left:1276.5px;top:617.40px">1</div>
<div class="rn" style="top:638.80px">22</div>
<div class="cl" style="left:299.6px;top:638.89px">420000</div>
<div class="cl" style="left:377.5px;top:638.89px;font-size:10.6px">仙桃市</div>
<div class="cl" style="left:447.5px;top:638.89px">2020-02-22</div>
<div class="cl" style="left:516.8px;top:638.89px;font-size:10.6px">湖北</div>
<div class="cl" style="left:614.8px;top:638.89px">429004</div>
<div class="cr" style="left:679.3px;width:62.9px;top:638.89px">0</div>
<div class="cr" style="left:749.0px;width:62.8px;top:638.89px">-17</div>
<div class="cr" style="left:818.6px;width:63.0px;top:638.89px">17</div>
<div class="cr" style="left:888.4px;width:62.3px;top:638.89px">0</div>
<div class="cr" style="left:957.5px;width:78.4px;top:638.89px">571</div>
<div class="cr" style="left:1042.7px;width:105.0px;top:638.89px">304</div>
<div class="cr" style="left:1154.5px;width:63.4px;top:638.89px">248</div>
<div class="cl" style="left:1276.5px;top:638.89px">1</div>
<div class="rn" style="top:660.29px">23</div>
<div class="cl" style="left:299.6px;top:660.39px">420000</div>
<div class="cl" style="left:377.5px;top:660.39px;font-size:10.6px">仙桃市</div>
<div class="cl" style="left:447.5px;top:660.39px">2020-02-23</div>
<div class="cl" style="left:516.8px;top:660.39px;font-size:10.6px">湖北</div>
<div class="cl" style="left:614.8px;top:660.39px">429004</div>
<div class="cr" style="left:679.3px;width:62.9px;top:660.39px">2</div>
<div class="cr" style="left:749.0px;width:62.8px;top:660.39px">-18</div>
<div class="cr" style="left:818.6px;width:63.0px;top:660.39px">20</div>
<div class="cr" style="left:888.4px;width:62.3px;top:660.39px">0</div>
<div class="cr" style="left:957.5px;width:78.4px;top:660.39px">573</div>
<div class="cr" style="left:1042.7px;width:105.0px;top:660.39px">286</div>
<div class="cr" style="left:1154.5px;width:63.4px;top:660.39px">268</div>
<div class="cl" style="left:1276.5px;top:660.39px">1</div>
</div>


<!-- vertical scrollbar -->
<div class="abs" style="left:1277.3px;top:189.3px;width:4px;height:106px;background:rgba(0,0,0,0.28);border-radius:2px"></div>
<!-- horizontal scrollbar -->
<div class="abs" style="left:297px;top:671.8px;width:958px;height:4px;background:rgba(0,0,0,0.28);border-radius:2px"></div>
<!-- footer -->
<div class="abs" style="left:261px;top:678px;width:1019px;height:22px;background:#fff"></div>
<div class="abs" style="left:274px;top:682px;line-height:14px;font-size:10.5px;color:#3a9be0;white-space:nowrap">显示行数</div>
<div class="abs" style="left:327.5px;top:682px;line-height:14px;font-size:10.5px;color:#555;white-space:nowrap">每页</div>
<div class="abs" style="left:351.5px;top:682px;line-height:14px;font-size:10.5px;color:#3a9be0;white-space:nowrap">100</div>
<svg class="abs" style="left:372.5px;top:686.5px" width="6" height="4" viewBox="0 0 6 4"><path d="M0,0H6L3,3.5Z" fill="#3a9be0"/></svg>
<div class="abs" style="left:380px;top:682px;line-height:14px;font-size:10.5px;color:#555;white-space:nowrap">条</div>
<div class="abs" style="left:404px;top:682px;line-height:14px;font-size:10.5px;color:#c8c8c8;white-space:nowrap">上一页</div>
<div class="abs" style="left:445.5px;top:682px;line-height:14px;font-size:10.5px;color:#444;white-space:nowrap">下一页</div>
<div class="abs" style="left:1223px;top:682px;line-height:14px;font-size:10.5px;color:#555;white-space:nowrap">耗时: 33ms</div>

<!-- dropdown menu -->
<div class="abs" style="left:8px;top:79px;width:120px;height:269px;background:#fff;border-radius:2px;box-shadow:0 1px 6px rgba(0,0,0,0.22)">
  <div class="abs" style="left:10px;top:9px;font-size:10.5px;line-height:14px;color:#bbb">模型</div>
  <svg class="abs" style="left:11px;top:35px" width="12" height="14" viewBox="0 0 12 14"><g fill="none" stroke="#333" stroke-width="1.1"><path d="M0.6,0.6H8L11.4,4V13.4H0.6Z"/><circle cx="4.6" cy="4.8" r="1.5"/><circle cx="6.8" cy="9.2" r="1.5"/><path d="M5.2,6.2L6.2,7.8"/></g><path d="M8,0.6V4H11.4Z" fill="#333"/></svg>
  <div class="abs" style="left:32.5px;top:34px;font-size:10.5px;line-height:14px;color:#333;white-space:nowrap">数据库表模型</div>
  <svg class="abs" style="left:10.5px;top:63px" width="14" height="14" viewBox="0 0 14 14"><g fill="none" stroke="#333" stroke-width="1"><path d="M1.5,4V1H9L12,3.2V4M1.5,11V13H12V11"/></g><text x="0" y="10.4" font-size="6.6" font-family="Liberation Sans" fill="#333" font-weight="bold" letter-spacing="-0.3">SQL</text></svg>
  <div class="abs" style="left:32.5px;top:62.5px;font-size:10.5px;line-height:14px;color:#333;white-space:nowrap">SQL查询</div>
  <svg class="abs" style="left:11px;top:92px" width="12" height="14" viewBox="0 0 12 14"><g fill="none" stroke="#333" stroke-width="1.1"><path d="M0.6,0.6H8L11.4,4V13.4H0.6Z"/><circle cx="3.6" cy="5.6" r="1.3"/><circle cx="3.6" cy="10.4" r="1.3"/><circle cx="8.4" cy="8" r="1.3"/><path d="M4.8,6.2L7.2,7.4M4.8,9.8L7.2,8.6"/></g><path d="M8,0.6V4H11.4Z" fill="#333"/></svg>
  <div class="abs" style="left:32.5px;top:91px;font-size:10.5px;line-height:14px;color:#333;white-space:nowrap">数据加工</div>
  <svg class="abs" style="left:11px;top:120px" width="12" height="14" viewBox="0 0 12 14"><g fill="none" stroke="#444" stroke-width="1"><path d="M0.6,0.6H8L11.4,4V13.4H0.6Z"/><path d="M8,0.6V4H11.4"/></g></svg>
  <div class="abs" style="left:32.5px;top:119.5px;font-size:10.5px;line-height:14px;color:#333;white-space:nowrap">空白模型</div>
  <div class="abs" style="left:0;top:147px;width:120px;height:1px;background:#ececec"></div>
  <div class="abs" style="left:10px;top:152.5px;font-size:10.5px;line-height:14px;color:#bbb">数据源</div>
  <svg class="abs" style="left:10.5px;top:178px" width="14" height="13" viewBox="0 0 14 13"><g stroke="#555" stroke-width="0.9"><path d="M4,3.2V1.6C4,0.9 5.8,0.5 8.6,0.5S13.2,0.9 13.2,1.6V8.6C13.2,9.3 11.5,9.6 9.2,9.6" fill="#e2e2e2"/><path d="M0.6,4.5V11.2C0.6,12 2.5,12.4 4.8,12.4S9,12 9,11.2V4.5" fill="#c9c9c9"/><ellipse cx="4.8" cy="4.5" rx="4.2" ry="1.3" fill="#dcdcdc"/><path d="M0.6,7.8C0.6,8.6 2.5,9 4.8,9S9,8.6 9,7.8M9.2,6.2C11.5,6.2 13.2,5.8 13.2,5.1" fill="none"/></g></svg>
  <div class="abs" style="left:32.5px;top:177.5px;font-size:10.5px;line-height:14px;color:#333;white-space:nowrap">数据库连接</div>
  <svg class="abs" style="left:11px;top:207px" width="11" height="12" viewBox="0 0 11 12"><g fill="none" stroke="#333" stroke-width="1.1"><path d="M5.5,9V1M1.8,4.6L5.5,0.9L9.2,4.6M0.5,11.3H10.5"/></g></svg>
  <div class="abs" style="left:32.5px;top:206px;font-size:10.5px;line-height:14px;color:#333;white-space:nowrap">上传数据文件</div>
  <div class="abs" style="left:0;top:232px;width:120px;height:1px;background:#ececec"></div>
  <svg class="abs" style="left:10.8px;top:245.2px" width="12.8" height="11" viewBox="0 0 14 11" preserveAspectRatio="none"><path d="M0,1C0,0.4 0.4,0 1,0H5L6.5,1.6H13C13.6,1.6 14,2 14,2.6V10C14,10.6 13.6,11 13,11H1C0.4,11 0,10.6 0,10Z" fill="#e3c89c"/></svg>
  <div class="abs" style="left:32.5px;top:244px;font-size:10.5px;line-height:14px;color:#333;white-space:nowrap">文件夹</div>
</div>

<!-- red arrow -->
<svg class="abs" style="left:0;top:0" width="1280" height="700" viewBox="0 0 1280 700" pointer-events="none">
  <path d="M106.6,284.6L116.6,287.0L114.3,289.6L187.2,360L112.1,291.9L109.2,296.0Z" fill="#f25a6c" stroke="#f25a6c" stroke-width="0.4" stroke-linejoin="round"/>
</svg>

</body>
</html>
